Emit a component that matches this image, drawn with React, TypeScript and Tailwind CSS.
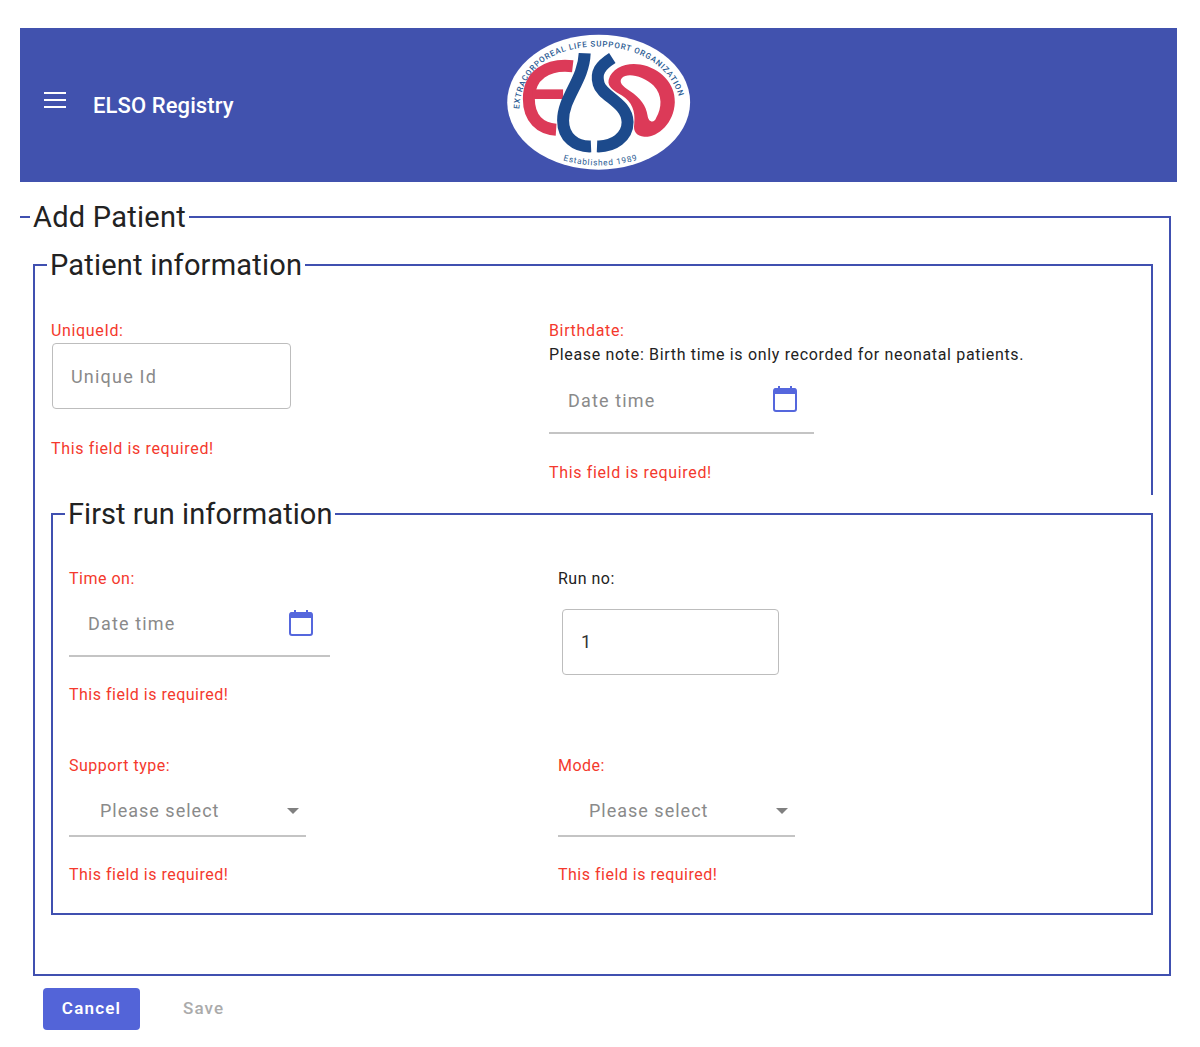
import { ReactNode } from "react"

const Logo = () => (
  <svg viewBox="50 40 552 412" width="184" height="137" className="mb-[6px] shrink-0">
    <ellipse cx="325" cy="245" rx="275" ry="203" fill="#fff" />
    <defs>
      <path id="topArc" d="M86 266 C 92 140, 190 78, 325 78 C 440 78, 545 135, 568 238 L 572 260" />
      <path id="bottomArc" d="M218 420 Q 330 452 445 418" />
    </defs>
    <text fontFamily="Roboto, sans-serif" fontSize="24" fontWeight="500" fill="#2c5c93">
      <textPath href="#topArc" textLength="645">EXTRACORPOREAL LIFE SUPPORT ORGANIZATION</textPath>
    </text>
    <text fontFamily="Roboto, sans-serif" fontSize="25" fill="#2c5c93">
      <textPath href="#bottomArc" textLength="226">Established 1989</textPath>
    </text>
    {/* E */}
    <path d="M247 137 C 170 128, 115 165, 115 235 C 115 295, 150 325, 197 328" fill="none" stroke="#dc3a58" strokeWidth="36" />
    <path d="M125 221 L218 221" fill="none" stroke="#dc3a58" strokeWidth="29" />
    {/* D */}
    <path
      fillRule="evenodd"
      fill="#dc3a58"
      d="M355 178 C 365 140, 410 125, 450 132 C 510 142, 556 190, 554 245 C 552 310, 500 352, 462 349 C 440 347, 428 335, 432 310 C 436 270, 425 245, 395 225 C 375 212, 350 200, 355 178 Z M395 172 C 385 185, 395 195, 420 212 C 450 232, 468 255, 472 285 C 474 305, 492 310, 498 292 C 515 262, 518 225, 490 195 C 460 165, 410 155, 395 172 Z"
    />
    {/* L and S */}
    <path d="M283 98 C 280 180, 218 230, 218 300 C 218 350, 255 380, 302 378" fill="none" stroke="#1c4a8c" strokeWidth="36" />
    <path d="M366 112 C 330 135, 315 155, 325 190 C 335 228, 410 245, 412 305 C 412 350, 370 380, 320 378" fill="none" stroke="#1c4a8c" strokeWidth="36" />
  </svg>
)

const CalendarIcon = () => (
  <svg viewBox="0 0 24 26" width="24" height="26" fill="none" className="-mt-px">
    <rect x="1" y="3" width="22" height="22" rx="2" stroke="#5567dd" strokeWidth="2" />
    <path d="M1 4 a2 2 0 0 1 2-2 h18 a2 2 0 0 1 2 2 v4 H1 Z" fill="#5567dd" />
    <rect x="5" y="0" width="2" height="4" fill="#5567dd" />
    <rect x="17" y="0" width="2" height="4" fill="#5567dd" />
  </svg>
)

const Label = ({ children, error = true, tracking = "tracking-[0.65px]" }: { children: ReactNode; error?: boolean; tracking?: string }) => (
  <div className={`h-6 text-base leading-6 ${tracking} ${error ? "text-[#f4392d]" : "text-[#222]"}`}>{children}</div>
)

const Required = ({ className }: { className: string }) => (
  <div className={`h-6 text-base leading-6 text-[#f4392d] ${className}`}>This field is required!</div>
)

const DateField = ({ width, text = "" }: { width: string; text?: string }) => (
  <div className={`flex items-center justify-between border-b-2 border-[#c4c4c4] pl-[19px] pr-[17px] text-lg tracking-[1.15px] text-[#8a8a8a] ${width}`}>
    <span className={text}>Date time</span>
    <CalendarIcon />
  </div>
)

const SelectField = () => (
  <div className="mt-[10px] flex h-[49px] w-[237px] items-center justify-between border-b-2 border-[#c4c4c4] pb-[2px] pl-[31px] pr-[7px] text-lg tracking-[1px] text-[#8a8a8a]">
    <span>Please select</span>
    <span className="h-0 w-0 border-x-[6.5px] border-t-[6px] border-x-transparent border-t-[#808080]" />
  </div>
)

export default function App() {
  return (
    <div className="min-h-[1047px] bg-white pl-5 pr-[23px] pt-7 font-['Roboto',sans-serif] text-[#222]">
      <header className="flex h-[154px] items-center bg-[#4152ae] text-white">
        <div className="ml-6 mb-[10px] flex w-[22px] flex-col gap-[5px]">
          <span className="h-[2px] bg-white" />
          <span className="h-[2px] bg-white" />
          <span className="h-[2px] bg-white" />
        </div>
        <h1 className="ml-[27px] mt-px w-[414px] text-[22px] font-medium tracking-[0.1px]">ELSO Registry</h1>
        <Logo />
      </header>

      <fieldset className="mr-[6px] mt-[17px] border-r-2 border-t-2 border-[#4050b0]">
        <legend className="ml-[10px] px-[3px] text-[29px] leading-9 tracking-[0.25px]">Add Patient</legend>

        <div className="pt-3">
          {/* Patient information */}
          <fieldset className="ml-[13px] mr-4 h-[248px] border-x-2 border-t-2 border-[#4050b0]">
            <legend className="ml-[12px] px-[3px] text-[29px] leading-9 tracking-[0.2px]">Patient information</legend>
            <div className="grid grid-cols-[498px_1fr] pl-4 pt-[36px]">
              <div>
                <Label>UniqueId:</Label>
                <div className="ml-px flex h-[66px] w-[239px] items-center rounded border border-[#bdbdbd] pl-[18px] pt-[2px] text-lg tracking-[1.2px] text-[#8a8a8a]">
                  Unique Id
                </div>
                <Required className="mt-[28px] tracking-[0.65px]" />
              </div>
              <div>
                <Label>Birthdate:</Label>
                <div className="h-6 text-base leading-6 tracking-[0.67px] text-[#222]">Please note: Birth time is only recorded for neonatal patients.</div>
                <DateField width="h-[67px] w-[265px]" text="mt-[2px]" />
                <Required className="mt-[27px] tracking-[0.65px]" />
              </div>
            </div>
          </fieldset>

          <div className="ml-[13px] border-b-2 border-l-2 border-[#4050b0] pb-[59px] pl-4 pr-4 pt-px">
            {/* First run information */}
            <fieldset className="h-[419px] border-2 border-[#4050b0]">
              <legend className="ml-[12px] px-[3px] text-[29px] leading-9 tracking-[0.05px]">First run information</legend>
              <div className="grid grid-cols-[489px_1fr] pl-4 pt-[35px]">
                <div>
                  <Label tracking="tracking-[0.5px]">Time on:</Label>
                  <DateField width="mt-px h-[65px] w-[261px]" />
                  <Required className="mt-[26px] tracking-[0.5px]" />
                </div>
                <div>
                  <Label error={false} tracking="tracking-[0.5px]">Run no:</Label>
                  <div className="ml-1 mt-[18px] flex h-[66px] w-[217px] items-center rounded border border-[#bdbdbd] pl-[18px] text-lg text-[#333]">
                    1
                  </div>
                </div>
              </div>
              <div className="grid grid-cols-[489px_1fr] pl-4 pt-[47px]">
                <div>
                  <Label tracking="tracking-[0.5px]">Support type:</Label>
                  <SelectField />
                  <Required className="mt-[26px] tracking-[0.5px]" />
                </div>
                <div>
                  <Label tracking="tracking-[0.5px]">Mode:</Label>
                  <SelectField />
                  <Required className="mt-[26px] tracking-[0.5px]" />
                </div>
              </div>
            </fieldset>
          </div>
        </div>
      </fieldset>

      <div className="ml-[23px] mt-3 flex items-center gap-[43px]">
        <button className="h-[42px] w-[97px] rounded bg-[#5364d8] text-[17px] font-semibold tracking-[1.2px] text-white">Cancel</button>
        <span className="text-[17px] font-medium tracking-[1.1px] text-[#ababab]">Save</span>
      </div>
    </div>
  )
}
